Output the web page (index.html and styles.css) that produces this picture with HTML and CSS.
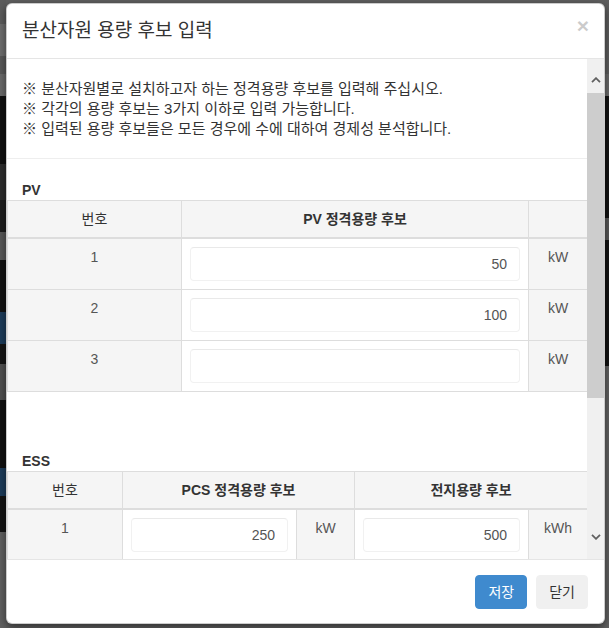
FILE: index.html
```html
<!DOCTYPE html>
<html lang="ko">
<head>
    <meta charset="UTF-8">
    <meta name="viewport" content="width=device-width, initial-scale=1.0">
    <title>분산자원 용량 후보 입력</title>
    <link rel="stylesheet" href="styles.css">
</head>
<body>
    <div class="modal">
        <div class="modal-header">
            <h4 class="modal-title">분산자원 용량 후보 입력</h4>
            <button class="close">&times;</button>
        </div>

        <div class="modal-body">
            <div class="body-content">
                <div class="notes">
                    <p>※ 분산자원별로 설치하고자 하는 정격용량 후보를 입력해 주십시오.</p>
                    <p>※ 각각의 용량 후보는 3가지 이하로 입력 가능합니다.</p>
                    <p>※ 입력된 용량 후보들은 모든 경우에 수에 대하여 경제성 분석합니다.</p>
                </div>

                <div class="section">
                    <h5>PV</h5>
                    <table class="cand-table">
                        <colgroup>
                            <col class="pv-no">
                            <col class="pv-val">
                            <col class="unit">
                        </colgroup>
                        <thead>
                            <tr>
                                <th class="plain">번호</th>
                                <th>PV 정격용량 후보</th>
                                <th></th>
                            </tr>
                        </thead>
                        <tbody>
                            <tr>
                                <td>1</td>
                                <td class="input-cell"><input type="text" class="form-control" value="50"></td>
                                <td>kW</td>
                            </tr>
                            <tr>
                                <td>2</td>
                                <td class="input-cell"><input type="text" class="form-control" value="100"></td>
                                <td>kW</td>
                            </tr>
                            <tr>
                                <td>3</td>
                                <td class="input-cell"><input type="text" class="form-control" value=""></td>
                                <td>kW</td>
                            </tr>
                        </tbody>
                    </table>
                </div>

                <div class="section">
                    <h5>ESS</h5>
                    <table class="cand-table">
                        <colgroup>
                            <col class="ess-no">
                            <col class="ess-val">
                            <col class="unit-s">
                            <col class="ess-val">
                            <col class="unit">
                        </colgroup>
                        <thead>
                            <tr>
                                <th class="plain">번호</th>
                                <th colspan="2">PCS 정격용량 후보</th>
                                <th colspan="2">전지용량 후보</th>
                            </tr>
                        </thead>
                        <tbody>
                            <tr>
                                <td>1</td>
                                <td class="input-cell"><input type="text" class="form-control" value="250"></td>
                                <td>kW</td>
                                <td class="input-cell"><input type="text" class="form-control" value="500"></td>
                                <td>kWh</td>
                            </tr>
                        </tbody>
                    </table>
                </div>
            </div>

            <div class="scrollbar">
                <div class="sb-btn sb-up">
                    <svg width="10" height="6" viewBox="0 0 10 6"><path d="M1 5.2 L5 1.2 L9 5.2" fill="none" stroke="#606060" stroke-width="1.8"/></svg>
                </div>
                <div class="sb-thumb"></div>
                <div class="sb-track"></div>
                <div class="sb-btn sb-down">
                    <svg width="10" height="6" viewBox="0 0 10 6"><path d="M1 0.8 L5 4.8 L9 0.8" fill="none" stroke="#606060" stroke-width="1.8"/></svg>
                </div>
            </div>
        </div>

        <div class="modal-footer">
            <button class="btn btn-primary">저장</button>
            <button class="btn btn-default">닫기</button>
        </div>
    </div>
</body>
</html>
```

FILE: styles.css
```css
html, body {
    height: 100%;
}
body {
    margin: 0;
    padding: 3px 0 0 6px;
    box-sizing: border-box;
    overflow: hidden;
    font-family: "Liberation Sans", "Noto Sans CJK KR", sans-serif;
    font-size: 14px;
    line-height: 20px;
    color: #333;
    /* dimmed page behind the dialog */
    background-color: #5f5f5f;
    background-image:
        linear-gradient(to bottom, #5c5c5c 0 24px, #6e6e6e 24px 56px, #595959 56px 74px, #6a6a6a 74px 96px, #111 96px 164px, #2e2e2e 164px 200px, #1c1c1c 200px 232px, #585858 232px 260px, #121212 260px 312px, #1d3c5a 312px 344px, #151515 344px 364px, #505050 364px 400px, #111 400px 468px, #1d3c5a 468px 496px, #141414 496px 532px, #606060 532px),
        linear-gradient(to bottom, #5e5e5e 0 74px, #6a6a6a 74px 96px, #121212 96px 218px, #585858 218px 240px, #121212 240px 366px, #616161 366px);
    background-position: left top, right top;
    background-size: 6px 100%, 5px 100%;
    background-repeat: no-repeat;
}

.modal {
    width: 599px;
    box-sizing: border-box;
    background-color: #fff;
    border: 1px solid rgba(0, 0, 0, 0.2);
    border-radius: 6px;
    box-shadow: 0 3px 9px rgba(0, 0, 0, 0.5);
    overflow: hidden;
}

.modal-header {
    display: flex;
    justify-content: space-between;
    align-items: flex-start;
    padding: 14px 15px;
    border-bottom: 1px solid #e5e5e5;
}
.modal-title {
    margin: 0;
    font-size: 19px;
    line-height: 26px;
    font-weight: normal;
    color: #333;
}
.close {
    margin-top: -3px;
    padding: 0;
    background: none;
    border: 0;
    font-family: "Liberation Sans", sans-serif;
    font-size: 21px;
    font-weight: bold;
    line-height: 1;
    color: #000;
    opacity: 0.2;
}

.modal-body {
    display: flex;
    height: 500px;
}
.body-content {
    flex: 1;
    overflow: hidden;
}

.notes {
    padding: 20px 15px 19px;
    border-bottom: 1px solid #eee;
    font-size: 15px;
}
.notes p {
    margin: 0;
}

.section {
    padding-top: 21px;
}
.section h5 {
    margin: 0 0 0 15px;
    font-size: 14px;
    line-height: 20px;
    font-weight: bold;
    color: #333;
}

.cand-table {
    width: 100%;
    border-collapse: collapse;
    table-layout: fixed;
    margin-bottom: 38px;
}
.cand-table th, .cand-table td {
    padding: 8px;
    border: 1px solid #ddd;
    background-color: #f5f5f5;
    text-align: center;
    vertical-align: top;
    line-height: 20px;
}
.cand-table th {
    font-weight: bold;
    color: #333;
}
.cand-table th.plain {
    font-weight: normal;
}
.cand-table thead th {
    border-bottom-width: 2px;
}
.cand-table td {
    color: #555;
}
.cand-table td.input-cell {
    background-color: #fff;
}

.pv-no { width: 174px; }
.pv-val { width: 347px; }
.unit { width: 59px; }
.ess-no { width: 115px; }
.ess-val { width: 174px; }
.unit-s { width: 58px; }

.form-control {
    display: block;
    width: 100%;
    height: 34px;
    box-sizing: border-box;
    padding: 6px 12px;
    border: 1px solid #f1f1f1;
    border-top-color: #e9e9e9;
    border-radius: 4px;
    background-color: #fff;
    font-family: "Liberation Sans", sans-serif;
    font-size: 14px;
    color: #555;
    text-align: right;
}

.scrollbar {
    width: 17px;
    display: flex;
    flex-direction: column;
    background-color: #f0f0f0;
}
.sb-btn {
    height: 34px;
    box-sizing: border-box;
    display: flex;
    justify-content: center;
}
.sb-btn svg {
    display: block;
}
.sb-up {
    align-items: flex-end;
    padding-bottom: 10px;
}
.sb-down {
    align-items: flex-start;
    padding-top: 9px;
}
.sb-thumb {
    height: 305px;
    background-color: #cdcdcd;
}
.sb-track {
    flex: 1;
}

.modal-footer {
    display: flex;
    justify-content: flex-end;
    gap: 9px;
    padding: 15px 16px 14px;
    border-top: 1px solid #e5e5e5;
}
.btn {
    height: 34px;
    padding: 6px 12px;
    border: 1px solid transparent;
    border-radius: 4px;
    font-family: "Liberation Sans", "Noto Sans CJK KR", sans-serif;
    font-size: 14px;
    line-height: 20px;
    cursor: pointer;
}
.btn-primary {
    background-color: #3f8ace;
    border-color: #3f8ace;
    color: #fff;
}
.btn-default {
    background-color: #f0f0f0;
    border-color: #f0f0f0;
    color: #333;
}
```
